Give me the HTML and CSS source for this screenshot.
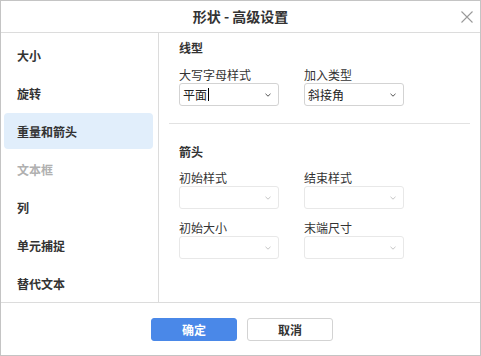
FILE: index.html
```html
<!DOCTYPE html>
<html lang="zh-CN">
<head>
<meta charset="utf-8">
<title>形状 - 高级设置</title>
<link rel="stylesheet" href="styles.css">
</head>
<body>
<div class="dialog">
  <header class="titlebar">
    <span class="spacer"></span>
    <h1 class="title">形状 - 高级设置</h1>
    <button class="close" aria-label="关闭">
      <svg width="12" height="12" viewBox="0 0 12 12"><path d="M0.5 0.5 L11.5 11.5 M11.5 0.5 L0.5 11.5" stroke="#9a9a9a" stroke-width="1.1" fill="none"/></svg>
    </button>
  </header>
  <div class="body">
    <nav class="sidebar">
      <div class="nav-item">大小</div>
      <div class="nav-item">旋转</div>
      <div class="nav-item active">重量和箭头</div>
      <div class="nav-item disabled">文本框</div>
      <div class="nav-item">列</div>
      <div class="nav-item">单元捕捉</div>
      <div class="nav-item">替代文本</div>
    </nav>
    <main class="panel">
      <section class="group">
        <h2 class="group-title">线型</h2>
        <div class="fields">
          <div class="field">
            <div class="label">大写字母样式</div>
            <div class="select"><span class="value">平面<span class="caret"></span></span><svg class="chev" width="6" height="4" viewBox="0 0 6 4"><path d="M0.5 0.8 L3 3.2 L5.5 0.8" stroke="#555" stroke-width="1" fill="none"/></svg></div>
          </div>
          <div class="field">
            <div class="label">加入类型</div>
            <div class="select"><span class="value">斜接角</span><svg class="chev" width="6" height="4" viewBox="0 0 6 4"><path d="M0.5 0.8 L3 3.2 L5.5 0.8" stroke="#555" stroke-width="1" fill="none"/></svg></div>
          </div>
        </div>
      </section>
      <div class="separator"></div>
      <section class="group second">
        <h2 class="group-title">箭头</h2>
        <div class="fields">
          <div class="field">
            <div class="label">初始样式</div>
            <div class="select disabled"><span class="value"></span><svg class="chev" width="6" height="4" viewBox="0 0 6 4"><path d="M0.5 0.8 L3 3.2 L5.5 0.8" stroke="#c4c4c4" stroke-width="1" fill="none"/></svg></div>
          </div>
          <div class="field">
            <div class="label">结束样式</div>
            <div class="select disabled"><span class="value"></span><svg class="chev" width="6" height="4" viewBox="0 0 6 4"><path d="M0.5 0.8 L3 3.2 L5.5 0.8" stroke="#c4c4c4" stroke-width="1" fill="none"/></svg></div>
          </div>
          <div class="field">
            <div class="label">初始大小</div>
            <div class="select disabled"><span class="value"></span><svg class="chev" width="6" height="4" viewBox="0 0 6 4"><path d="M0.5 0.8 L3 3.2 L5.5 0.8" stroke="#c4c4c4" stroke-width="1" fill="none"/></svg></div>
          </div>
          <div class="field">
            <div class="label">末端尺寸</div>
            <div class="select disabled"><span class="value"></span><svg class="chev" width="6" height="4" viewBox="0 0 6 4"><path d="M0.5 0.8 L3 3.2 L5.5 0.8" stroke="#c4c4c4" stroke-width="1" fill="none"/></svg></div>
          </div>
        </div>
      </section>
    </main>
  </div>
  <footer class="footer">
    <button class="btn primary">确定</button>
    <button class="btn">取消</button>
  </footer>
</div>
</body>
</html>
```

FILE: styles.css
```css
* { box-sizing: border-box; }
html, body {
  margin: 0;
  padding: 0;
  background: #ffffff;
}
body {
  font-family: "Noto Sans CJK SC", "Noto Sans", sans-serif;
  font-size: 12px;
  color: #333333;
}
.dialog {
  width: 481px;
  height: 356px;
  border: 1px solid #c4c4c4;
  display: flex;
  flex-direction: column;
  background: #fff;
}
.titlebar {
  height: 32px;
  flex: none;
  border-bottom: 1px solid #dcdcdc;
  display: grid;
  grid-template-columns: 1fr auto 1fr;
  align-items: center;
}
.title {
  margin: 0;
  font-size: 14px;
  font-weight: 700;
  color: #333;
  line-height: 31px;
}
.close {
  justify-self: end;
  margin-right: 7px;
  width: 12px;
  height: 12px;
  padding: 0;
  border: 0;
  background: none;
  display: flex;
  margin-top: 0px;
}
.body {
  flex: 1;
  display: flex;
  min-height: 0;
}
.sidebar {
  width: 158px;
  flex: none;
  border-right: 1px solid #dcdcdc;
  padding-top: 4px;
}
.nav-item {
  height: 36px;
  margin: 0 5px 2px 3px;
  padding-left: 13px;
  display: flex;
  align-items: center;
  font-weight: 700;
  color: #333;
  border-radius: 4px;
}
.nav-item.active {
  background: #e1eefb;
}
.nav-item.disabled {
  color: #b0b0b0;
}
.panel {
  flex: 1;
  padding: 7px 10px 0;
}
.group {
  padding: 0 10px;
}
.group.second {
  margin-top: 20px;
}
.group-title {
  margin: 0;
  font-size: 12px;
  font-weight: 700;
  line-height: 16px;
  color: #333;
}
.fields {
  display: grid;
  grid-template-columns: 100px 100px;
  column-gap: 25px;
  row-gap: 11px;
  margin-top: 11px;
}
.group.second .fields {
  margin-top: 10px;
}
.label {
  line-height: 16px;
  color: #333;
}
.select {
  height: 23px;
  border: 1px solid #d3d3d3;
  border-radius: 3px;
  display: flex;
  align-items: center;
  justify-content: space-between;
  padding: 0 7px 0 3px;
  color: #222;
}
.select.disabled {
  border-color: #e8e8e8;
}
.value {
  display: flex;
  align-items: center;
  line-height: 16px;
}
.caret {
  display: inline-block;
  width: 1px;
  height: 13px;
  background: #000;
  margin-left: 1px;
}
.chev {
  display: block;
  margin-top: 1px;
}
.separator {
  margin-top: 17px;
  border-top: 1px solid #e2e2e2;
}
.footer {
  height: 53px;
  flex: none;
  border-top: 1px solid #dcdcdc;
  display: flex;
  justify-content: center;
  align-items: flex-start;
  gap: 10px;
  padding-top: 15px;
  padding-left: 3px;
}
.btn {
  width: 86px;
  height: 23px;
  border: 1px solid #d3d3d3;
  border-radius: 3px;
  background: #fff;
  font-family: "Noto Sans CJK SC", "Noto Sans", sans-serif;
  font-size: 12px;
  font-weight: 700;
  color: #333;
  padding: 0;
}
.btn.primary {
  background: #4a88e8;
  border-color: #4a88e8;
  color: #fff;
}
```
